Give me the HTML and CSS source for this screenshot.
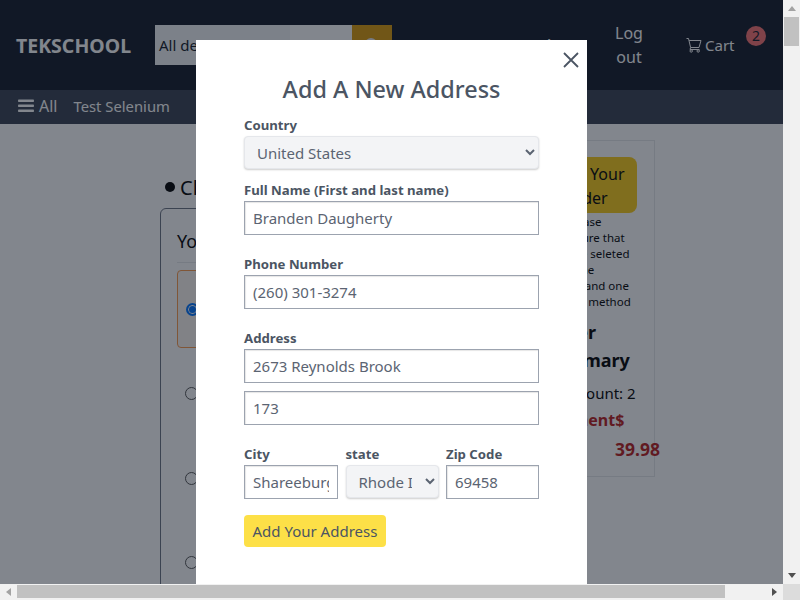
FILE: index.html
```html
<!DOCTYPE html>
<html lang="en">
<head>
    <meta charset="UTF-8">
    <meta name="viewport" content="width=device-width, initial-scale=1.0">
    <title>Tekschool - Checkout</title>
    <link rel="stylesheet" href="styles.css">
</head>
<body>
    <div class="window">
        <div class="viewport">
            <header class="top-bar">
                <div class="logo">TEKSCHOOL</div>
                <div class="search">
                    <div class="search-select">All departments</div>
                    <div class="search-input"></div>
                    <div class="search-btn">
                        <svg width="16" height="16" viewBox="0 0 16 16" fill="none" stroke="#e5e7eb" stroke-width="2"><circle cx="7" cy="7" r="5"/><path d="M11 11l4 4"/></svg>
                    </div>
                </div>
                <div class="account">Acct</div>
                <div class="logout">Log out</div>
                <div class="cart">
                    <svg width="16" height="16" viewBox="0 0 16 16" fill="none" stroke="currentColor" stroke-width="1"><path d="M.5 1.5H2.5L4.6 10.5H13L15 3.5H3.2"/><path d="M4.6 10.5L4 12.5H13.5"/><circle cx="5.2" cy="14" r="1.2"/><circle cx="12.2" cy="14" r="1.2"/></svg>
                    <span>Cart</span>
                    <span class="cart-count">2</span>
                </div>
            </header>
            <nav class="sub-bar">
                <div class="all-link">
                    <svg width="16" height="14" viewBox="0 0 16 14" fill="currentColor"><rect y="0.5" width="16" height="2.6" rx="0.8"/><rect y="5.5" width="16" height="2.6" rx="0.8"/><rect y="10.5" width="16" height="2.6" rx="0.8"/></svg>
                    <span>All</span>
                </div>
                <div class="sub-link">Test Selenium</div>
            </nav>
            <main class="checkout">
                <div class="checkout-left">
                    <h2 class="checkout-title"><span class="dot"></span>Cl</h2>
                    <div class="address-card">
                        <h3 class="address-title">Your</h3>
                        <div class="address-row selected"><span class="radio checked"></span></div>
                        <div class="address-row"><span class="radio"></span></div>
                        <div class="address-row"><span class="radio"></span></div>
                        <div class="address-row"><span class="radio"></span></div>
                    </div>
                </div>
                <aside class="summary">
                    <div class="place-btn">Place Your Order</div>
                    <p class="summary-note">Please<br>make sure that<br>you have seleted<br>one<br>address and one<br>payment method</p>
                    <h3 class="summary-title">Order<br>Summary</h3>
                    <div class="summary-count">Item count: 2</div>
                    <div class="summary-price">Payment$</div>
                    <div class="summary-total">39.98</div>
                </aside>
            </main>

            <div class="overlay">
                <div class="modal">
                    <button class="close-btn" type="button">
                        <svg width="16" height="16" viewBox="0 0 16 16" fill="none" stroke="#4b5563" stroke-width="1.8"><path d="M1 1l14 14M15 1L1 15"/></svg>
                    </button>
                    <h1 class="modal-title">Add A New Address</h1>
                    <form class="address-form">
                        <label class="field-label">Country</label>
                        <select class="field-select country"><option>United States</option></select>

                        <label class="field-label name-label">Full Name (First and last name)</label>
                        <input class="field-input" value="Branden Daugherty">

                        <label class="field-label group-label">Phone Number</label>
                        <input class="field-input" value="(260) 301-3274">

                        <label class="field-label group-label">Address</label>
                        <input class="field-input" value="2673 Reynolds Brook">
                        <input class="field-input second-line" value="173">

                        <div class="city-row">
                            <div class="city-col">
                                <label class="field-label">City</label>
                                <input class="field-input" value="Shareeburgh">
                            </div>
                            <div class="city-col">
                                <label class="field-label">state</label>
                                <select class="field-select state"><option>Rhode Island</option></select>
                            </div>
                            <div class="city-col">
                                <label class="field-label">Zip Code</label>
                                <input class="field-input" value="69458">
                            </div>
                        </div>
                        <button class="submit-btn" type="button">Add Your Address</button>
                    </form>
                </div>
            </div>
        </div>

        <div class="scroll-y">
            <span class="arrow up"></span>
            <div class="scroll-y-track"><div class="scroll-y-thumb"></div></div>
            <span class="arrow down"></span>
        </div>
        <div class="scroll-x">
            <span class="arrow left"></span>
            <div class="scroll-x-track"><div class="scroll-x-thumb"></div></div>
            <span class="arrow right"></span>
        </div>
        <div class="scroll-corner"></div>
    </div>
</body>
</html>
```

FILE: styles.css
```css
* {
    margin: 0;
    padding: 0;
    box-sizing: border-box;
}

body {
    font-family: "Noto Sans", "Open Sans", sans-serif;
    background: #fff;
    overflow: hidden;
}

.window {
    display: grid;
    grid-template-columns: 783px 17px;
    grid-template-rows: 584px 16px;
    width: 800px;
    height: 600px;
}

.viewport {
    position: relative;
    overflow: hidden;
    background: #fff;
}

/* top bar */
.top-bar {
    display: flex;
    align-items: center;
    height: 90px;
    padding-left: 16px;
    background: #111827;
    color: #fff;
}

.logo {
    width: 139px;
    font-size: 19.5px;
    font-weight: 700;
}

.search {
    display: flex;
    width: 237px;
    height: 40px;
    flex-shrink: 0;
}

.search-select {
    width: 135px;
    padding: 8px 4px;
    overflow: hidden;
    white-space: nowrap;
    font-size: 15px;
    line-height: 24px;
    color: #111827;
    background: #f3f4f6;
}

.search-input {
    width: 62px;
    background: #fff;
}

.search-btn {
    display: flex;
    align-items: center;
    justify-content: center;
    width: 40px;
    background: #dc9a08;
}

.account {
    width: 63px;
    margin-left: 152px;
    font-size: 16px;
}

.logout {
    width: 30px;
    margin-left: 7px;
    text-align: center;
    font-size: 16px;
    line-height: 24px;
}

.cart {
    position: relative;
    display: flex;
    align-items: center;
    gap: 3px;
    margin-left: 42px;
    font-size: 15px;
}

.cart-count {
    position: absolute;
    top: -9px;
    left: 60px;
    width: 20px;
    height: 20px;
    border-radius: 50%;
    background: #f87171;
    color: #111827;
    font-size: 14px;
    line-height: 20px;
    text-align: center;
}

.sub-bar {
    display: flex;
    align-items: center;
    gap: 16px;
    height: 34px;
    padding: 0 0 2px 18px;
    background: #374151;
    color: #fff;
    font-size: 16px;
}

.all-link {
    display: flex;
    align-items: center;
    gap: 5px;
}

.sub-link {
    font-size: 14.8px;
}

/* checkout page behind the modal */
.checkout {
    display: flex;
    padding: 16px 0 0 160px;
}

.checkout-left {
    width: 349px;
    padding-top: 35px;
}

.checkout-title {
    display: flex;
    align-items: center;
    gap: 5px;
    padding-left: 5px;
    height: 24px;
    font-size: 20px;
    font-weight: 400;
    white-space: nowrap;
    color: #000;
}

.dot {
    width: 10px;
    height: 10px;
    border-radius: 50%;
    background: #000;
}

.address-card {
    height: 500px;
    margin-top: 9px;
    padding: 20px 16px;
    border: 1px solid #6b7280;
    border-radius: 6px;
}

.address-title {
    height: 34px;
    font-size: 18px;
    font-weight: 400;
    white-space: nowrap;
    border-bottom: 1px solid #e5e7eb;
    color: #000;
}

.address-row {
    height: 84px;
    padding: 31px 8px 0 8px;
}

.address-row.selected {
    height: 78px;
    margin-top: 7px;
    padding: 32px 8px 0 8px;
    border: 1px solid #fb9a4b;
    border-radius: 4px;
    background: #fdf6f0;
}

.address-row.selected + .address-row {
    padding-top: 39px;
    height: 93px;
}

.radio {
    display: block;
    width: 13px;
    height: 13px;
    border: 1px solid #555;
    border-radius: 50%;
    background: #fff;
}

.radio.checked {
    border: 2px solid #0075ff;
    box-shadow: inset 0 0 0 1px #fff;
    background: #0075ff;
}

.summary {
    width: 146px;
    height: 337px;
    padding: 16px 17px;
    border: 1px solid #e5e7eb;
    color: #000;
}

.place-btn {
    height: 56px;
    padding: 5px 5px 0 12px;
    border-radius: 8px;
    background: #facc15;
    font-size: 16px;
    line-height: 24px;
    text-align: center;
}

.summary-note {
    margin: 1px -4px 0 0;
    font-size: 11.5px;
    line-height: 16px;
    text-align: center;
}

.summary-title {
    margin-top: 8px;
    padding-left: 17px;
    font-size: 18px;
    line-height: 28px;
    white-space: nowrap;
}

.summary-count {
    margin-top: 7px;
    padding-left: 15px;
    font-size: 15px;
    line-height: 24px;
    white-space: nowrap;
}

.summary-price {
    padding-left: 17px;
    margin-top: 2px;
    color: #b91c1c;
    font-size: 16px;
    font-weight: 700;
    line-height: 26px;
}

.summary-total {
    margin-top: 3px;
    margin-left: 88px;
    color: #b91c1c;
    font-size: 17.5px;
    font-weight: 700;
    line-height: 26px;
}

/* modal */
.overlay {
    position: absolute;
    top: 0;
    left: 0;
    right: 0;
    bottom: 0;
    display: flex;
    justify-content: center;
    padding-top: 40px;
    background: rgba(17, 24, 39, 0.525);
}

.modal {
    position: relative;
    width: 391px;
    height: 600px;
    padding: 32px 48px;
    background: #fff;
}

.close-btn {
    position: absolute;
    top: 12px;
    right: 8px;
    display: flex;
    border: none;
    background: none;
}

.modal-title {
    font-size: 23.4px;
    font-weight: 500;
    line-height: 34px;
    text-align: center;
    color: #4b5563;
    white-space: nowrap;
}

.address-form {
    margin-top: 10px;
}

.field-label {
    display: block;
    height: 20px;
    font-size: 13.2px;
    line-height: 19px;
    font-weight: 700;
    color: #4b5563;
    white-space: nowrap;
}

.name-label {
    margin-top: 12px;
}

.group-label {
    margin-top: 20px;
}

.field-select,
.field-input {
    display: block;
    width: 100%;
    font-family: inherit;
    font-size: 15px;
    color: #5b6472;
}

.field-select {
    height: 33px;
    padding-left: 8px;
    border: 1px solid #e5e7eb;
    border-radius: 4px;
    background: #f3f4f6;
    box-shadow: 0 1px 2px rgba(0, 0, 0, 0.2);
}

.field-select.state {
    padding-right: 10px;
}

.field-input {
    height: 34px;
    padding: 0 8px;
    border: 1px solid #9ca3af;
    background: #fff;
    box-shadow: inset 1px 1px 1px rgba(0, 0, 0, 0.1);
}

.second-line {
    margin-top: 8px;
}

.city-row {
    display: grid;
    grid-template-columns: 94px 93px 93px;
    gap: 7.5px;
    margin-top: 20px;
}

.submit-btn {
    display: block;
    height: 32px;
    margin-top: 16px;
    padding: 0 8.5px;
    border: none;
    border-radius: 4px;
    background: #fde047;
    color: #4b5563;
    font-family: inherit;
    font-size: 15px;
}

/* scrollbars */
.scroll-y {
    display: flex;
    flex-direction: column;
    align-items: center;
    background: #f1f1f1;
}

.scroll-y-track {
    flex: 1;
    width: 100%;
    padding-top: 1px;
}

.scroll-y-thumb {
    width: 15px;
    height: 29px;
    margin: 0 auto;
    background: #c1c1c1;
}

.scroll-x {
    display: flex;
    align-items: center;
    background: #f1f1f1;
}

.scroll-x-track {
    flex: 1;
    height: 100%;
    padding-top: 1px;
}

.scroll-x-thumb {
    width: 708px;
    height: 13px;
    background: #c1c1c1;
}

.scroll-corner {
    background: #dcdcdc;
}

.arrow {
    display: block;
    flex-shrink: 0;
    width: 0;
    height: 0;
    border-style: solid;
    border-color: transparent;
}

.arrow.up {
    margin: 6px 0 5px;
    border-width: 0 4px 5px;
    border-bottom-color: #a3a3a3;
}

.arrow.down {
    margin: 5px 0 6px;
    border-width: 5px 4px 0;
    border-top-color: #505050;
}

.arrow.left {
    margin: 0 6px 0 6px;
    border-width: 4px 5px 4px 0;
    border-right-color: #a3a3a3;
}

.arrow.right {
    margin: 0 6px;
    border-width: 4px 0 4px 5px;
    border-left-color: #505050;
}
```
